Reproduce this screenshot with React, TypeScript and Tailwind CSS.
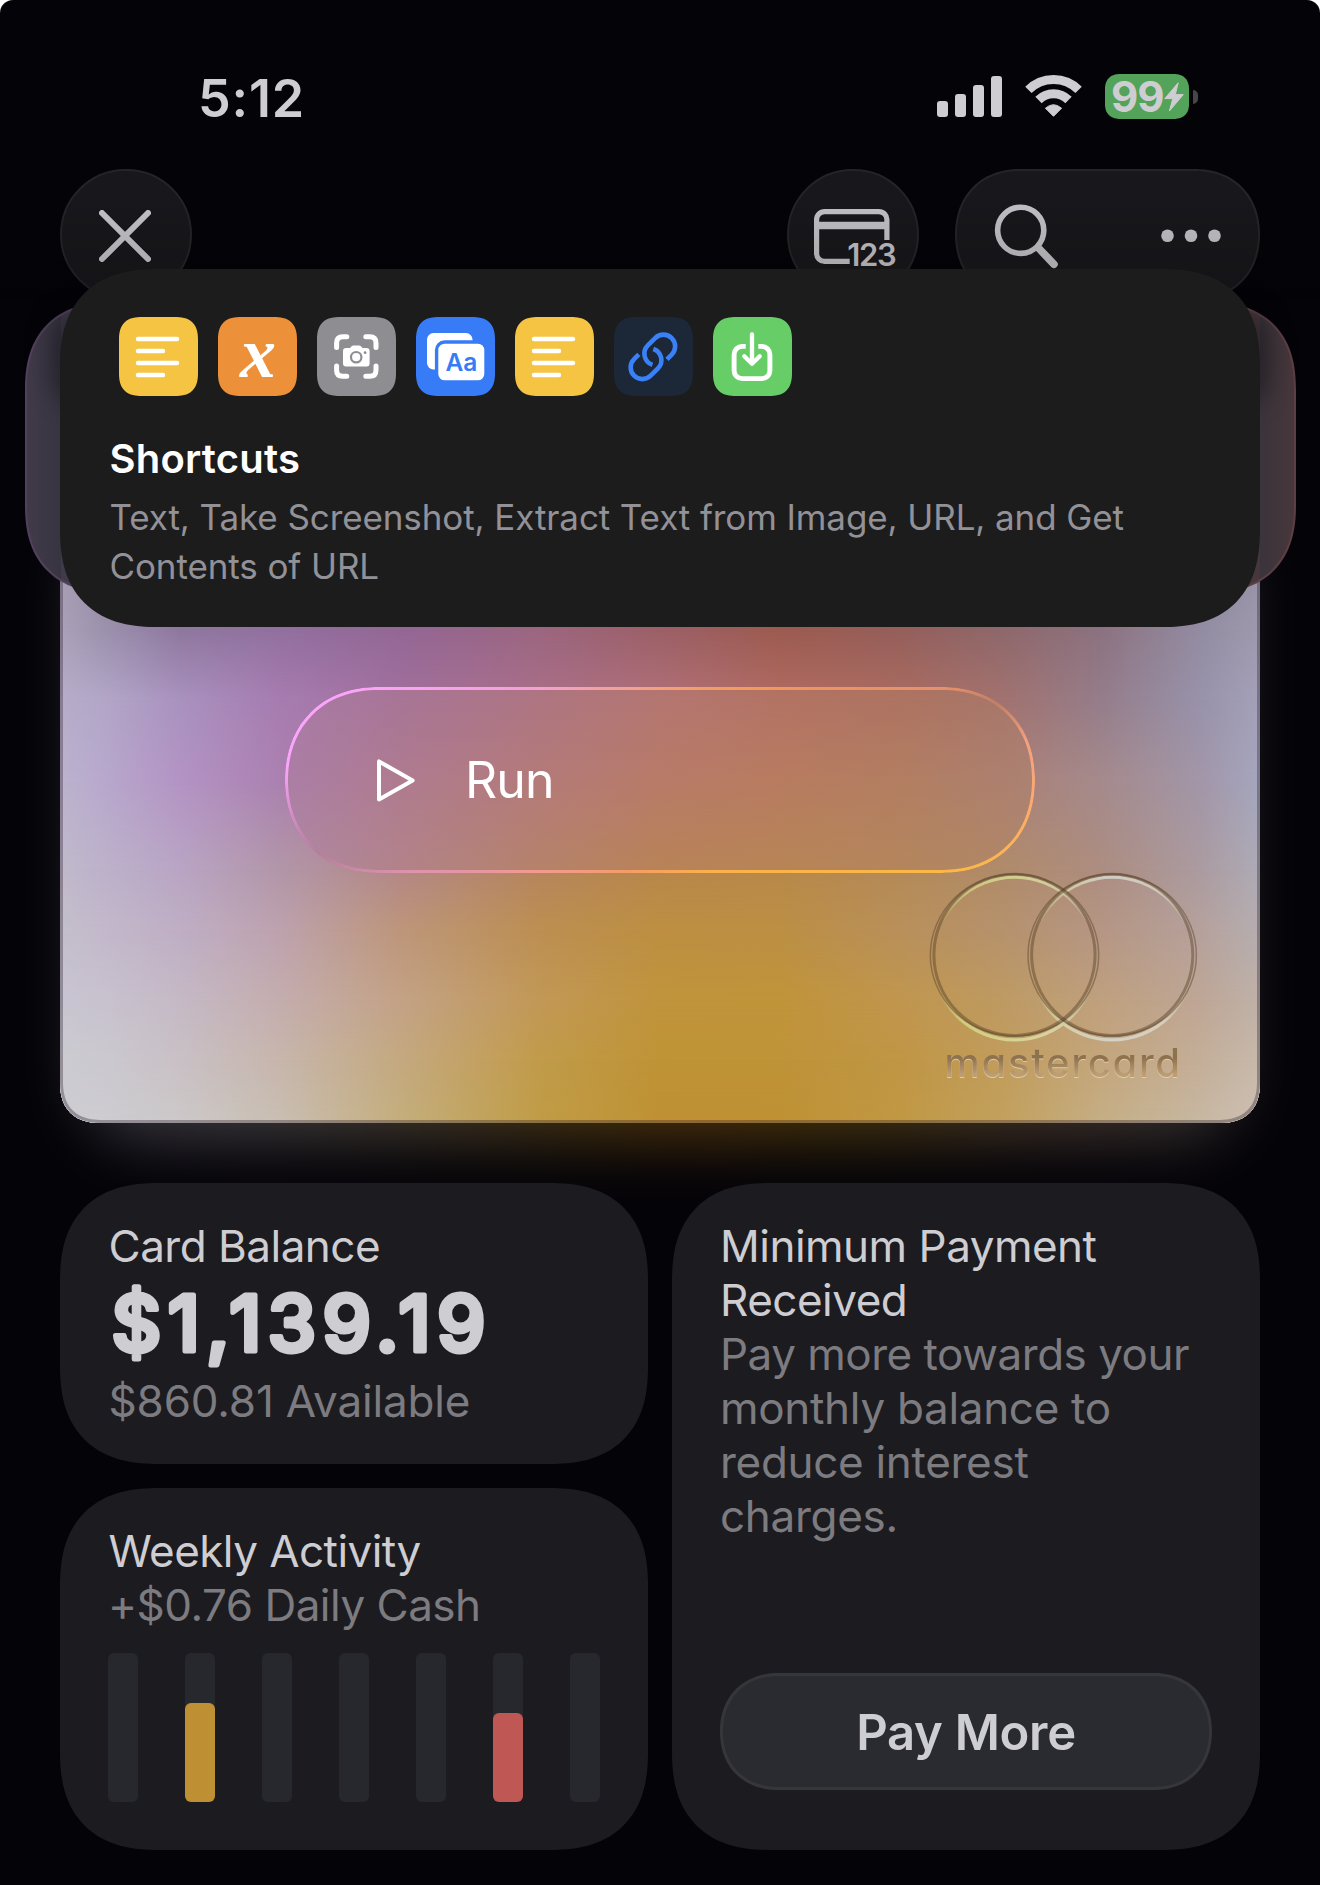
import React from "react";

/* Horizontal colour bands of the card, blended vertically from one to the next. */
const STOPS = [60, 100, 180, 280, 400, 540, 660, 780, 900, 1000, 1100, 1200, 1260];
const BANDS: { y: number; colors: string[] }[] = [
  { y: 560, colors: ["#a69cb2", "#968ca4", "#83709a", "#8b6498", "#8b6090", "#935f76", "#93585f", "#935548", "#8a5752", "#866064", "#806a76", "#888094", "#9792a6"] },
  { y: 630, colors: ["#aba1b8", "#9d93ae", "#8f789f", "#92709f", "#946796", "#9c6680", "#9c6067", "#9d5b50", "#955f5b", "#8f686b", "#8c7280", "#938ca2", "#9e9aae"] },
  { y: 700, colors: ["#b6adc9", "#b3a7c8", "#a992bf", "#a77cb0", "#a1709d", "#a96f88", "#b07078", "#b16b62", "#aa6c60", "#a2726f", "#957d8a", "#9892aa", "#a4a1b9"] },
  { y: 780, colors: ["#bbb3cd", "#b8a9cd", "#b393c4", "#ab81b0", "#ae7b92", "#b37978", "#b77868", "#b87a5c", "#b27d60", "#ab8076", "#a58a8c", "#a296a8", "#a5a6be"] },
  { y: 870, colors: ["#c0bacb", "#bdb2ca", "#b9a5c4", "#b296a8", "#b48886", "#b6865c", "#b8874a", "#b8894a", "#b48a58", "#b08b6a", "#ad8d80", "#ab9ba0", "#aeabb6"] },
  { y: 930, colors: ["#c4bfcb", "#c3b9cb", "#bfaec4", "#bda2ae", "#bd967a", "#bc8f52", "#bd8f42", "#bc8f44", "#b9905a", "#b6926c", "#b59684", "#b6a19c", "#b5aeb0"] },
  { y: 1000, colors: ["#c8c5d1", "#c8c2cf", "#c5b9c5", "#c4adae", "#c3a286", "#c29856", "#c0943c", "#c0943a", "#c0964e", "#be9a62", "#bfa07e", "#bea696", "#bfb1a8"] },
  { y: 1060, colors: ["#cccbd0", "#cbc9d0", "#c9c0c5", "#c7b6ac", "#c4a980", "#c19b4a", "#bf9336", "#bf9338", "#c09645", "#c19c5c", "#c4a67c", "#c4ae98", "#c7b9ab"] },
  { y: 1123, colors: ["#cecdd1", "#cdccd0", "#ccc8c8", "#c9beb2", "#c4ae7c", "#c09c46", "#be9133", "#be9133", "#c09844", "#c2a05c", "#c5ae84", "#c7b8a2", "#cdbfb3"] },
];
const CARD_TOP = 370;

const band = (colors: string[]) =>
  `linear-gradient(to right, ${colors.map((c, i) => `${c} ${STOPS[i] - 60}px`).join(", ")})`;

function CardSurface() {
  return (
    <>
      {BANDS.map((b, i) => {
        const mask =
          i === 0
            ? undefined
            : `linear-gradient(to bottom, transparent ${BANDS[i - 1].y - CARD_TOP}px, black ${b.y - CARD_TOP}px)`;
        return (
          <div
            key={b.y}
            className="absolute inset-0"
            style={{ backgroundImage: band(b.colors), maskImage: mask, WebkitMaskImage: mask }}
          />
        );
      })}
    </>
  );
}

function StatusBar() {
  return (
    <div className="flex h-[169px] items-start pl-[198px] pr-[122px]">
      <span className="mt-[69px] text-[52px] leading-[60px] font-semibold tracking-[0.8px] text-[#cecdd2]">5:12</span>
      <div className="ml-auto mt-[74px] flex items-start">
        <svg className="mt-[2px]" width="65" height="42" viewBox="0 0 65 42" fill="#cecdd2">
          <rect x="0" y="25" width="11" height="16" rx="3" />
          <rect x="18" y="18" width="11" height="23" rx="3" />
          <rect x="36" y="9" width="11" height="32" rx="3" />
          <rect x="54" y="0" width="11" height="41" rx="3" />
        </svg>
        <svg className="ml-[23px] mt-px" width="57" height="43" viewBox="0 0 57 43" fill="none" stroke="#cecdd2" strokeWidth="9">
          <path d="M3.4 14.9A35.5 35.5 0 0 1 53.6 14.9" />
          <path d="M13.5 25A21.2 21.2 0 0 1 43.5 25" />
          <path d="M20.4 33.2Q28.5 26.2 36.6 33.2L28.5 41.3Z" fill="#cecdd2" stroke="#cecdd2" strokeWidth="1" strokeLinejoin="round" />
        </svg>
        <div className="ml-[23px] flex h-[45px] w-[84px] items-center rounded-[15px] bg-[#53a35a] pl-[6px] [corner-shape:superellipse(1.2)]">
          <span className="text-[42px] leading-[45px] font-[650] tracking-[-1.1px] text-[#cecdd2]">99</span>
          <svg className="ml-px shrink-0" width="20" height="30" viewBox="0 0 20 30" fill="#cecdd2" stroke="#cecdd2" strokeWidth="1" strokeLinejoin="round">
            <path d="M14.2.8 .8 16.6H8.8L5.4 29 19.3 12.6H11.3Z" />
          </svg>
        </div>
        <div className="ml-[4px] mt-[16px] h-[14px] w-[5px] rounded-r-full bg-[#46454a]" />
      </div>
    </div>
  );
}

function Header() {
  return (
    <div className="relative flex h-[131px] pr-[60px] pl-[60px]">
      <button className="flex h-[131px] w-[132px] items-center justify-center rounded-full border-[2px] border-[#252529] bg-[#18171b]">
        <svg className="mt-[3px] mr-[2px]" width="52" height="52" viewBox="0 0 52 52" stroke="#c6c5ca" strokeWidth="6" strokeLinecap="round">
          <path d="M3 3 49 49M49 3 3 49" />
        </svg>
      </button>
      <button className="ml-auto flex h-[131px] w-[132px] items-start rounded-full border-[2px] border-[#252529] bg-[#18171b] pt-[38px] pl-[25px]">
        <svg width="84" height="70" viewBox="0 0 84 70" fill="none" stroke="#c4c3c8" strokeWidth="5.2">
          <path d="M35.7 52.4H10.6A8 8 0 0 1 2.6 44.4V10.6A8 8 0 0 1 10.6 2.6H64.9A8 8 0 0 1 72.9 10.6V31" />
          <path d="M2.6 16.5H72.9" strokeWidth="7.4" />
          <text x="33.3" y="57" fill="#c4c3c8" stroke="none" className="text-[31px] font-semibold tracking-[-1.3px]">123</text>
        </svg>
      </button>
      <div className="ml-[36px] flex h-[131px] w-[305px] items-start rounded-[76px] border-[2px] border-[#252529] bg-[#18171b] pl-[37px] [corner-shape:superellipse(1.12)]">
        <svg className="mt-[33px]" width="66" height="66" viewBox="0 0 66 66" fill="none" stroke="#c4c3c8" strokeLinecap="round">
          <circle cx="26.7" cy="26.3" r="23.1" strokeWidth="5.6" />
          <path d="M44.5 44 60 60.3" strokeWidth="7.6" />
        </svg>
        <svg className="mt-[58px] ml-[101px]" width="61" height="14" viewBox="0 0 61 14" fill="#c4c3c8">
          <circle cx="6.5" cy="6.7" r="6.3" />
          <circle cx="30" cy="6.7" r="6.3" />
          <circle cx="53.5" cy="6.7" r="6.3" />
        </svg>
      </div>
      <div className="absolute inset-x-0 top-[20px] h-[111px] bg-linear-to-b from-transparent to-black/20" />
    </div>
  );
}

function TextTile() {
  return (
    <svg width="79" height="79" viewBox="0 0 79 79" stroke="#fff" strokeWidth="4.5" strokeLinecap="round">
      <path d="M19 22H58M19 34H44M19 46H58M19 58H44" />
    </svg>
  );
}

function CameraTile() {
  return (
    <svg width="79" height="79" viewBox="0 0 79 79" fill="none" stroke="#fff" strokeWidth="5" strokeLinecap="round">
      <path d="M19.6 30.5V26Q19.6 19.8 25.8 19.8H29.8M48.8 19.8H52.8Q59 19.8 59 26V30.5M59 49V53.2Q59 59.2 52.8 59.2H48.8M29.8 59.2H25.8Q19.6 59.2 19.6 53.2V49" />
      <path d="M29 31H33L34.6 29.3Q35.2 28.4 36.5 28.4H42Q43.3 28.4 43.9 29.3L45.5 31H49.6Q52.6 31 52.6 34V46.6Q52.6 49.6 49.6 49.6H29Q26 49.6 26 46.6V34Q26 31 29 31Z" fill="#fff" stroke="none" />
      <circle cx="39.2" cy="40.2" r="5.2" stroke="#8e8d92" strokeWidth="2.2" />
      <circle cx="48.1" cy="35.7" r="1.4" fill="#8e8d92" stroke="none" />
    </svg>
  );
}

function TranslateTile() {
  return (
    <svg width="79" height="79" viewBox="0 0 79 79" fill="#fff">
      <rect x="11" y="16" width="45.5" height="36.5" rx="6.5" />
      <rect x="20.6" y="25" width="49.4" height="40" rx="8" stroke="#377cf6" strokeWidth="3.4" />
      <text x="29.4" y="53.5" fill="#377cf6" className="text-[24.5px] font-semibold">Aa</text>
    </svg>
  );
}

function LinkTile() {
  return (
    <svg width="79" height="79" viewBox="0 0 79 79" fill="none" stroke="#3a80f7" strokeWidth="4.6">
      <g transform="translate(38.9 39.9) rotate(-45)">
        <path d="M-8.2 -11.7H-14.9A11.7 11.7 0 0 0 -14.9 11.7H-4.5A11.7 11.7 0 0 0 5.9 -5.3" />
        <path d="M8.2 11.7H14.9A11.7 11.7 0 0 0 14.9 -11.7H4.5A11.7 11.7 0 0 0 -5.9 5.3" />
      </g>
    </svg>
  );
}

function DownloadTile() {
  return (
    <svg width="79" height="79" viewBox="0 0 79 79" fill="none" stroke="#fff" strokeWidth="4.9">
      <path d="M32.7 29.4H29.1A8 8 0 0 0 21.1 37.4V53.6A8 8 0 0 0 29.1 61.6H48.9A8 8 0 0 0 56.9 53.6V37.4A8 8 0 0 0 48.9 29.4H45.3" />
      <path d="M39 17.4V45.5M31.3 39.3 39 46.8 46.7 39.3" strokeWidth="4.3" strokeLinecap="round" strokeLinejoin="round" />
    </svg>
  );
}

function Tile({ className, children }: { className: string; children: React.ReactNode }) {
  return (
    <div className={`flex h-[79px] w-[79px] items-center justify-center rounded-[23px] [corner-shape:superellipse(1.35)] ${className}`}>
      {children}
    </div>
  );
}

function ShortcutSheet() {
  return (
    <div className="absolute top-[269px] left-[60px] h-[357.5px] w-[1200px] rounded-[98px] bg-[#1c1c1d] pt-[48px] pl-[49px] [corner-shape:superellipse(1.28)]">
      <div className="flex gap-[20px] pl-[10px]">
        <Tile className="bg-[#f5c443]"><TextTile /></Tile>
        <Tile className="bg-[#ec9039]">
          <span className="mt-[-7px] ml-px font-['Liberation_Serif',serif] text-[72px] leading-[72px] font-bold text-white italic">x</span>
        </Tile>
        <Tile className="bg-[#8e8d92]"><CameraTile /></Tile>
        <Tile className="bg-[#377cf6]"><TranslateTile /></Tile>
        <Tile className="bg-[#f5c443]"><TextTile /></Tile>
        <Tile className="bg-[#1c2738]"><LinkTile /></Tile>
        <Tile className="bg-[#67ce67]"><DownloadTile /></Tile>
      </div>
      <h2 className="mt-[39px] ml-[0.5px] text-[40px] leading-[48px] font-semibold tracking-[0.2px] text-white">Shortcuts</h2>
      <p className="mt-[10px] ml-[0.5px] w-[1060px] text-[35px] leading-[49px] tracking-[-0.1px] text-[#929197]">
        Text, Take Screenshot, Extract Text from Image, URL, and Get
        <br />
        Contents of URL
      </p>
    </div>
  );
}

function SidePanel() {
  return (
    <div className="absolute top-[302px] left-[24.5px] h-[291px] w-[1271px] rounded-[88px] bg-linear-to-r from-[#50405c] to-[#5c3e43] p-[2px] [corner-shape:superellipse(1.25)]">
      <div className="flex h-full w-full justify-between overflow-hidden rounded-[86px] bg-linear-to-r from-[#413a49] to-[#47373b] [corner-shape:superellipse(1.25)]">
        <div className="h-full w-[34px] bg-linear-to-r from-transparent to-[#353340]/80" />
        <div className="h-full w-[34px] bg-linear-to-l from-transparent to-[#37333b]/80" />
      </div>
      <div className="absolute top-[10px] left-[26px] h-[90px] w-[44px] rounded-full bg-black/35 blur-[12px]" />
      <div className="absolute top-[10px] right-[26px] h-[90px] w-[44px] rounded-full bg-black/35 blur-[12px]" />
    </div>
  );
}

function RunButton() {
  return (
    <button className="absolute top-[317px] left-[225px] flex h-[186px] w-[750px] items-center rounded-[106px] bg-linear-to-r from-[#ac7a9c]/45 via-[#b97e68]/45 to-[#b08060]/35 pl-[92px] [corner-shape:superellipse(1.12)]">
      <span className="absolute inset-0 rounded-[106px] bg-[conic-gradient(from_0deg_at_50%_50%,#f5a07c_0deg,#f39a5c_45deg,#e8906a_72deg,#c07f66_77deg,#f2a080_84deg,#fba873_92deg,#fbb35a_100deg,#fbb748_106deg,#fbb04c_150deg,#f59c66_200deg,#f29a90_235deg,#dd93ac_250deg,#b47f9c_258deg,#cf8cc4_264deg,#fba4fb_272deg,#fba4fb_286deg,#f5a0e0_300deg,#f4a0a8_325deg,#f5a07c_360deg)] p-[3px] [corner-shape:superellipse(1.12)] [mask:linear-gradient(#000_0_0)_content-box_exclude,linear-gradient(#000_0_0)]" />
      <svg width="38" height="43" viewBox="0 0 38 43" fill="none" stroke="#fff" strokeWidth="4" strokeLinejoin="round">
        <path d="M2 2.4V40.6L35.6 21.5Z" />
      </svg>
      <span className="ml-[50px] text-[50px] leading-[60px] tracking-[-0.9px] text-white">Run</span>
    </button>
  );
}

function Mastercard() {
  return (
    <div className="absolute top-[497px] left-[864px] flex w-[276px] flex-col items-center">
      <svg className="shrink-0" width="276" height="176" viewBox="0 0 276 176" fill="none">
        <defs>
          <linearGradient id="shine" gradientUnits="userSpaceOnUse" x1="6" y1="0" x2="272" y2="0">
            <stop offset="0" stopColor="#cfcf78" />
            <stop offset=".45" stopColor="#d8d4a0" />
            <stop offset=".65" stopColor="#d2d0c8" />
            <stop offset="1" stopColor="#dcd3bc" />
          </linearGradient>
          <linearGradient id="fade" x1="0" y1="0" x2="0" y2="1">
            <stop offset="0" stopColor="#fff" />
            <stop offset=".12" stopColor="#fff" stopOpacity=".85" />
            <stop offset=".34" stopColor="#fff" stopOpacity="0" />
            <stop offset=".7" stopColor="#fff" stopOpacity="0" />
            <stop offset=".88" stopColor="#fff" stopOpacity=".9" />
            <stop offset="1" stopColor="#fff" />
          </linearGradient>
          <mask id="poles" maskUnits="userSpaceOnUse" x="0" y="0" width="276" height="176">
            <rect width="276" height="176" fill="url(#fade)" />
          </mask>
        </defs>
        <g mask="url(#poles)" stroke="url(#shine)" strokeWidth="3.2">
          <circle cx="90.5" cy="91.5" r="81.4" />
          <circle cx="188.2" cy="91.5" r="81.4" />
        </g>
        <g stroke="#5b452c" strokeOpacity=".48">
          <circle cx="90.5" cy="87.8" r="80.6" strokeWidth="3" />
          <circle cx="188.2" cy="87.8" r="80.6" strokeWidth="3" />
          <ellipse cx="90.5" cy="88" rx="84.2" ry="81" strokeWidth="1.5" />
          <ellipse cx="188.2" cy="88" rx="84.2" ry="81" strokeWidth="1.5" />
        </g>
      </svg>
      <span className="mt-[-2px] ml-[2px] bg-linear-to-b from-[#8e714d] from-38% to-[#bd9d74] to-76% bg-clip-text text-[40px] leading-[44px] font-medium tracking-[1.7px] text-transparent [filter:drop-shadow(0_1.6px_0.5px_rgba(218,214,176,0.9))] [font-feature-settings:'cv11']">
        mastercard
      </span>
    </div>
  );
}

function PaymentCard() {
  return (
    <div className="relative mx-[60px] mt-[70px] h-[753px] w-[1200px]">
      <div className="absolute inset-x-[22px] top-[150px] -bottom-[18px] rounded-[60px] bg-[linear-gradient(to_right,#77767e,#918c90_14%,#97825c_30%,#a87814_45%,#b87414_52%,#a87c10_64%,#94765c_84%,#77706c)] opacity-40 blur-[30px]" />
      <div className="absolute inset-0 overflow-hidden rounded-[42px] [corner-shape:superellipse(1.3)]">
        <CardSurface />
        <div className="absolute inset-0 rounded-[42px] border-[3px] border-[#2b2030]/35 [corner-shape:superellipse(1.3)]" />
      </div>
      <Mastercard />
      <RunButton />
    </div>
  );
}

const DAYS = [0, 99, 0, 0, 0, 89, 0];

function Widgets() {
  return (
    <div className="relative mx-[60px] mt-[60px] flex gap-[24px] text-[44px] leading-[54px] tracking-[-0.5px] text-[#cecdd2]">
      <div className="flex w-[588px] flex-col gap-[24px]">
        <section className="h-[281px] rounded-[98px] bg-[#1c1b20] pt-[36px] pl-[48.5px] [corner-shape:superellipse(1.27)]">
          <p>Card Balance</p>
          <svg className="block" width="420" height="101" viewBox="0 0 420 101">
            <text x="2.5" y="78.3" fill="#cecdd2" stroke="#cecdd2" strokeWidth="5" strokeLinejoin="round" strokeLinecap="round" className="text-[77px] font-medium tracking-[6.5px]">
              $1,139.19
            </text>
          </svg>
          <p className="tracking-[-0.15px] text-[#7c7b80]">$860.81 Available</p>
        </section>
        <section className="h-[362px] rounded-[98px] bg-[#1c1b20] pt-[36px] pl-[48px] [corner-shape:superellipse(1.27)]">
          <p className="pl-[0.5px] tracking-[-0.55px]">Weekly Activity</p>
          <p className="tracking-[-0.5px] text-[#7c7b80]">+$0.76 Daily Cash</p>
          <div className="mt-[21px] flex gap-[47px]">
            {DAYS.map((h, i) => (
              <div key={i} className="flex h-[149px] w-[30px] items-end rounded-[6px] bg-[#27282d]">
                <div className={`w-full rounded-[6px] ${i === 1 ? "bg-[#be9033]" : "bg-[#bf5854]"}`} style={{ height: h }} />
              </div>
            ))}
          </div>
        </section>
      </div>
      <section className="flex w-[588px] flex-col rounded-[98px] bg-[#1c1b20] px-[48px] pt-[36px] pb-[60px] [corner-shape:superellipse(1.27)]">
        <p>Minimum Payment<br />Received</p>
        <p className="text-[#7c7b80]">
          Pay more towards your
          <br />
          <span className="tracking-[-0.3px]">monthly balance to<br />reduce interest<br />charges.</span>
        </p>
        <button className="mt-auto h-[117px] w-[492px] rounded-[66px] border-[3px] border-[#35363a] bg-[#2a2b30] pt-[2px] text-[49px] font-semibold tracking-[-0.3px] [corner-shape:superellipse(1.12)]">
          Pay More
        </button>
      </section>
    </div>
  );
}

export default function App() {
  return (
    <div className="h-[1885px] w-[1320px] overflow-hidden bg-white font-['Inter',sans-serif]">
      <div className="relative h-full w-full overflow-hidden rounded-t-[13px] bg-[#040308]">
        <StatusBar />
        <Header />
        <PaymentCard />
        <Widgets />
        <SidePanel />
        <ShortcutSheet />
      </div>
    </div>
  );
}
